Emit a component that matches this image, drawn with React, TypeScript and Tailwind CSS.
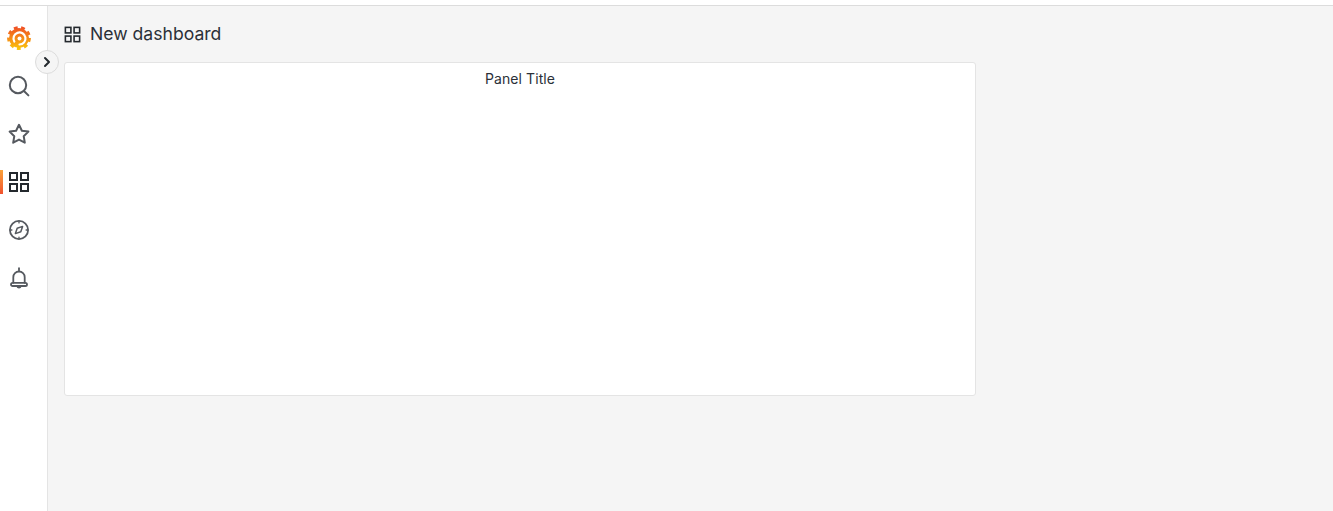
import { ChevronRight } from "lucide-react";

function GrafanaLogo() {
  return (
    <svg width="24" height="24" viewBox="0 0 24 24" fill="none">
      <defs>
        <linearGradient id="logoGradient" x1="12" y1="24" x2="12" y2="0" gradientUnits="userSpaceOnUse">
          <stop offset="0" stopColor="#fbca0a" />
          <stop offset="1" stopColor="#ef4a26" />
        </linearGradient>
      </defs>
      <circle cx="12" cy="12" r="10" fill="url(#logoGradient)" />
      <circle cx="12" cy="12" r="10.4" stroke="url(#logoGradient)" strokeWidth="3" strokeDasharray="3.8 3.46" />
      <path
        d="M7.3 15.5A6 6 0 1 1 12.5 18.5"
        stroke="#ffffff"
        strokeWidth="2.2"
        strokeLinecap="round"
      />
      <circle cx="12.5" cy="12.5" r="2" fill="#ffffff" />
    </svg>
  );
}

function SearchIcon() {
  return (
    <svg width="24" height="24" viewBox="0 0 24 24" fill="none" stroke="currentColor" strokeWidth="2" strokeLinecap="round">
      <circle cx="11" cy="11" r="8.2" />
      <path d="M17.2 17.2L21.4 21.4" />
    </svg>
  );
}

function StarIcon() {
  return (
    <svg width="24" height="24" viewBox="0 0 24 24" fill="none" stroke="currentColor" strokeWidth="2" strokeLinejoin="round">
      <path d="M12 2.8l2.9 5.9 6.5.9-4.7 4.6 1.1 6.5-5.8-3.1-5.8 3.1 1.1-6.5-4.7-4.6 6.5-.9z" />
    </svg>
  );
}

function GridIcon({ size }: { size: number }) {
  return (
    <svg width={size} height={size} viewBox="0 0 24 24" fill="none" stroke="currentColor" strokeWidth="2">
      <rect x="3" y="3" width="7" height="7" />
      <rect x="14" y="3" width="7" height="7" />
      <rect x="3" y="14" width="7" height="7" />
      <rect x="14" y="14" width="7" height="7" />
    </svg>
  );
}

function CompassIcon() {
  return (
    <svg width="24" height="24" viewBox="0 0 24 24" fill="none" stroke="currentColor" strokeWidth="1.8" strokeLinecap="round">
      <circle cx="12" cy="12" r="9.1" />
      <path d="M15.6 8.4l-1.8 5.4-5.4 1.8 1.8-5.4z" strokeWidth="1.5" strokeLinejoin="round" />
      <path d="M12 3.5v1.4M12 19.1v1.4M3.5 12h1.4M19.1 12h1.4" strokeWidth="1.3" />
    </svg>
  );
}

function BellIcon() {
  return (
    <svg width="24" height="24" viewBox="0 0 24 24" fill="none" stroke="currentColor" strokeWidth="1.8" strokeLinecap="round" strokeLinejoin="round">
      <path d="M12 2.2v2.4" />
      <path d="M6.3 16.8v-5.6a5.7 5.7 0 0 1 11.4 0v5.6" />
      <path d="M5.6 16.8h12.8a1.6 1.6 0 0 1 0 3.2H5.6a1.6 1.6 0 0 1 0-3.2z" />
      <path d="M10.2 20.2a1.9 1.9 0 0 0 3.6 0" />
    </svg>
  );
}

function NavItem({ children, active }: { children: React.ReactNode; active?: boolean }) {
  return (
    <div className={`relative flex h-12 w-full items-center justify-center pr-[9px] ${active ? "text-[#24292e]" : "text-[#55595f]"}`}>
      {active && <span className="absolute left-0 top-3 h-6 w-[3px] bg-gradient-to-b from-[#f9a13a] to-[#f0502d]" />}
      {children}
    </div>
  );
}

export default function App() {
  return (
    <div className="flex h-[511px] w-[1333px] flex-col overflow-hidden bg-[#f5f5f5] font-['Inter',sans-serif] text-[#24292e]">
      <div className="h-[6px] shrink-0 border-b border-[#dcdcdc] bg-white" />
      <div className="relative flex min-h-0 flex-1">
        <nav className="flex w-[48px] shrink-0 flex-col border-r border-[#e4e4e4] bg-white pt-2">
          <NavItem>
            <GrafanaLogo />
          </NavItem>
          <NavItem>
            <SearchIcon />
          </NavItem>
          <NavItem>
            <StarIcon />
          </NavItem>
          <NavItem active>
            <GridIcon size={24} />
          </NavItem>
          <NavItem>
            <CompassIcon />
          </NavItem>
          <NavItem>
            <BellIcon />
          </NavItem>
        </nav>

        <button className="absolute left-[35px] top-[44px] flex h-6 w-6 items-center justify-center rounded-full border border-[#dcdcdc] bg-[#f5f5f5] text-[#24292e]">
          <ChevronRight size={16} strokeWidth={3} />
        </button>

        <main className="flex-1 pl-[15px] pt-[16px]">
          <div className="flex h-6 items-center gap-[8px]">
            <GridIcon size={19} />
            <h1 className="text-[17.6px] leading-6 text-[#2b3038]">New dashboard</h1>
          </div>
          <section className="ml-px mt-[16px] h-[334px] w-[912px] rounded-[3px] border border-[#e4e4e4] bg-white">
            <h2 className="pt-[7px] text-center text-[14px] leading-[18px] tracking-[0.1px] text-[#2b3038]">Panel Title</h2>
          </section>
        </main>
      </div>
    </div>
  );
}
